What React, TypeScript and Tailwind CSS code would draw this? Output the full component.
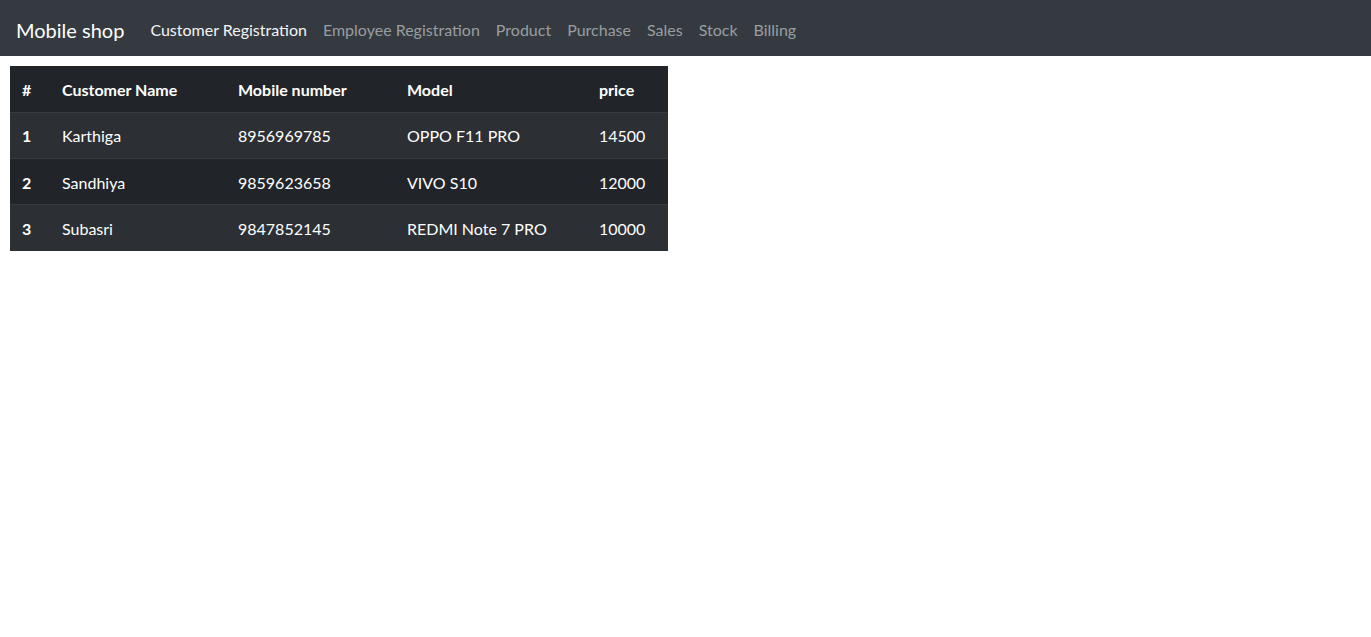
import React from 'react';

const links = [
  'Customer Registration',
  'Employee Registration',
  'Product',
  'Purchase',
  'Sales',
  'Stock',
  'Billing',
];

const rows = [
  { id: 1, name: 'Karthiga', mobile: '8956969785', model: 'OPPO F11 PRO', price: '14500' },
  { id: 2, name: 'Sandhiya', mobile: '9859623658', model: 'VIVO S10', price: '12000' },
  { id: 3, name: 'Subasri', mobile: '9847852145', model: 'REDMI Note 7 PRO', price: '10000' },
];

export default function App() {
  return (
    <div className="min-h-screen bg-white font-['Lato',sans-serif] text-[16px]">
      <nav className="flex h-14 items-center bg-[#343a40] px-4 pt-[3px]">
        <span className="mr-[18px] text-[20px] text-white">Mobile shop</span>
        <div className="flex">
          {links.map((l, i) => (
            <a
              key={l}
              className={`px-2 ${i === 0 ? 'text-[#f4f4f5]' : 'text-[#9a9da0]'}`}
            >
              {l}
            </a>
          ))}
        </div>
      </nav>

      <div className="p-[10px]">
        <table className="w-[658px] border-collapse text-white">
          <thead>
            <tr className="h-[46px] bg-[#212529] text-left font-bold">
              <th className="w-[40px] px-3 pt-[2px]">#</th>
              <th className="w-[176px] px-3 pt-[2px]">Customer Name</th>
              <th className="w-[169px] px-3 pt-[2px]">Mobile number</th>
              <th className="w-[192px] px-3 pt-[2px]">Model</th>
              <th className="px-3 pt-[2px]">price</th>
            </tr>
          </thead>
          <tbody>
            {rows.map((r, i) => (
              <tr
                key={r.id}
                className={`h-[46.4px] border-t border-[#373b3e] ${i % 2 === 0 ? 'bg-[#2c3034]' : 'bg-[#212529]'}`}
              >
                <td className="px-3 pt-[2px] font-bold">{r.id}</td>
                <td className="px-3 pt-[2px]">{r.name}</td>
                <td className="px-3 pt-[2px]">{r.mobile}</td>
                <td className="px-3 pt-[2px]">{r.model}</td>
                <td className="px-3 pt-[2px]">{r.price}</td>
              </tr>
            ))}
          </tbody>
        </table>
      </div>
    </div>
  );
}
